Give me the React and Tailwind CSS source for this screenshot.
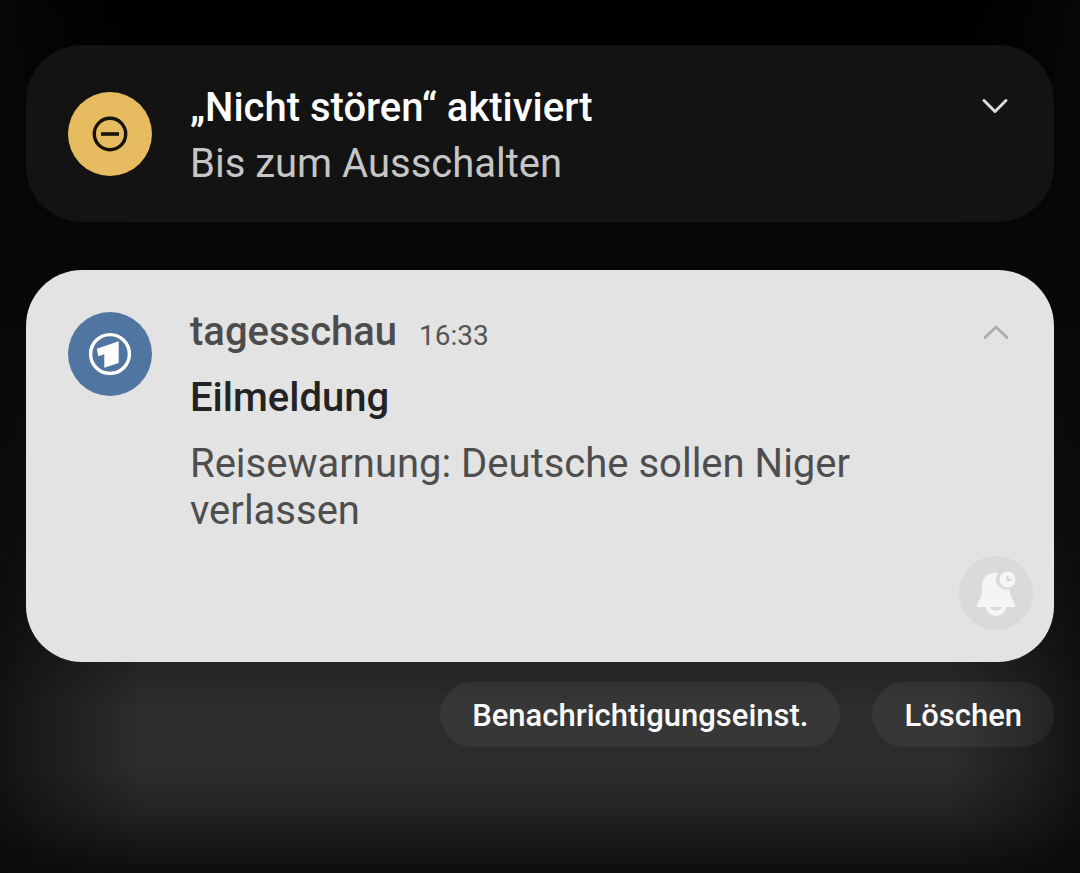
import React from "react";

function DoNotDisturbIcon() {
  return (
    <svg viewBox="0 0 84 84" className="size-21 shrink-0" aria-hidden="true">
      <circle cx="42" cy="42" r="42" fill="#e7bb60" />
      <circle cx="42" cy="42" r="15.7" fill="none" stroke="#17120a" strokeWidth="3.4" />
      <path d="M33 42h18" stroke="#17120a" strokeWidth="3.6" />
    </svg>
  );
}

function TagesschauIcon() {
  return (
    <svg viewBox="0 0 84 84" className="size-21 shrink-0" aria-hidden="true">
      <circle cx="42" cy="42" r="42" fill="#5175a1" />
      <circle cx="42" cy="42" r="19.4" fill="none" stroke="#fff" strokeWidth="3.4" />
      <path d="M28.800 36.800 L50.700 29.300 V51 L36.300 55.800 V42.300 L30.300 44.300 Z" fill="#fff" />
    </svg>
  );
}

function SnoozeIcon() {
  return (
    <svg viewBox="0 0 74 74" className="size-full" aria-hidden="true">
      <path
        d="M37.5 16.5c-9 0-14.5 5.5-14.5 13.5v6.5c0 3-1.5 5.5-3 8-1.2 2-1.8 4-2 6.5h38c-.2-2.5-.8-4.5-2-6.5-1.5-2.5-2.500-5-3-8l-.5-3c-7 1-13.500-3.500-13.500-9.500 0-3 .8-5.600 2.200-7.300z"
        fill="#f5f5f5"
      />
      <path d="M27 50.500c0 5.800 5 9.500 10 9.500s10-3.700 10-9.500h-4c-.8 3-3 4-6 4s-5.200-1-6-4z" fill="#f5f5f5" />
      <circle cx="48.500" cy="23.500" r="8" fill="#f5f5f5" />
      <path d="M48.500 20v3.800h3.500" fill="none" stroke="#d2d2d2" strokeWidth="2" />
    </svg>
  );
}

function Chevron({ up }) {
  return (
    <svg viewBox="0 0 28 16" className="h-4 w-7" aria-hidden="true">
      <path
        d={up ? "M3 13.500 14 3l11 10.500" : "M3 2.500 14 13.500l11-11"}
        fill="none"
        stroke="currentColor"
        strokeWidth="3"
        strokeLinecap="round"
        strokeLinejoin="round"
      />
    </svg>
  );
}

const pill =
  "rounded-full bg-white/5 px-8 pt-[14px] pb-[11px] text-[31px] leading-10 font-medium text-[#fafafa]";

export default function App() {
  return (
    <div className="min-h-screen bg-black bg-[linear-gradient(to_right,rgba(8,8,9,0.7)_0%,rgba(8,8,9,0.45)_4%,transparent_13%,transparent_88%,rgba(8,8,9,0.35)_95%,rgba(8,8,9,0.7)_100%),linear-gradient(to_bottom,#000000_0%,#030303_15%,#070707_30%,#0e0e10_50%,#1c1c1d_70%,#242424_76%,#2c2c2c_81%,#2c2c2c_88%,#232323_93%,#161616_97%,#0e0e0e_100%)] font-['Roboto',sans-serif]">
      <main className="flex flex-col px-[26px] pt-[45px]">
        <section className="flex gap-[38px] rounded-[56px] bg-[#131313] pt-[35px] pr-[45px] pb-[30px] pl-[42px]">
          <div className="pt-3">
            <DoNotDisturbIcon />
          </div>
          <div className="min-w-0 grow text-[40px] leading-14">
            <h2 className="font-medium text-white">„Nicht stören“ aktiviert</h2>
            <p className="text-[#c6c6c6]">Bis zum Ausschalten</p>
          </div>
          <button type="button" aria-label="Erweitern" className="mt-[18px] self-start text-[#dcdcdc]">
            <Chevron />
          </button>
        </section>

        <section className="mt-12 flex gap-[38px] rounded-[56px] bg-[#e3e3e3] pt-[38px] pr-[21px] pb-8 pl-[42px]">
          <div className="pt-1">
            <TagesschauIcon />
          </div>
          <div className="flex min-w-0 grow flex-col gap-[18px] text-[40px] leading-12">
            <div className="flex items-baseline gap-[22px]">
              <h2 className="font-medium text-[#4c4c4c]">tagesschau</h2>
              <time className="text-[28px] leading-8 text-[#555555]">16:33</time>
            </div>
            <h3 className="font-medium text-[#232323]">Eilmeldung</h3>
            <p className="max-w-[700px] leading-[47px] text-[#4e4e4e]">Reisewarnung: Deutsche sollen Niger verlassen</p>
          </div>
          <div className="flex flex-col items-center justify-between gap-[216px]">
            <button type="button" aria-label="Reduzieren" className="mt-4 text-[#aeaeae]">
              <Chevron up />
            </button>
            <button type="button" aria-label="Schlummern" className="size-[74px] rounded-full bg-[#dadada]">
              <SnoozeIcon />
            </button>
          </div>
        </section>

        <div className="mt-5 flex flex-wrap justify-end gap-8">
          <button type="button" className={pill}>
            Benachrichtigungseinst.
          </button>
          <button type="button" className={pill}>
            Löschen
          </button>
        </div>
      </main>
    </div>
  );
}
